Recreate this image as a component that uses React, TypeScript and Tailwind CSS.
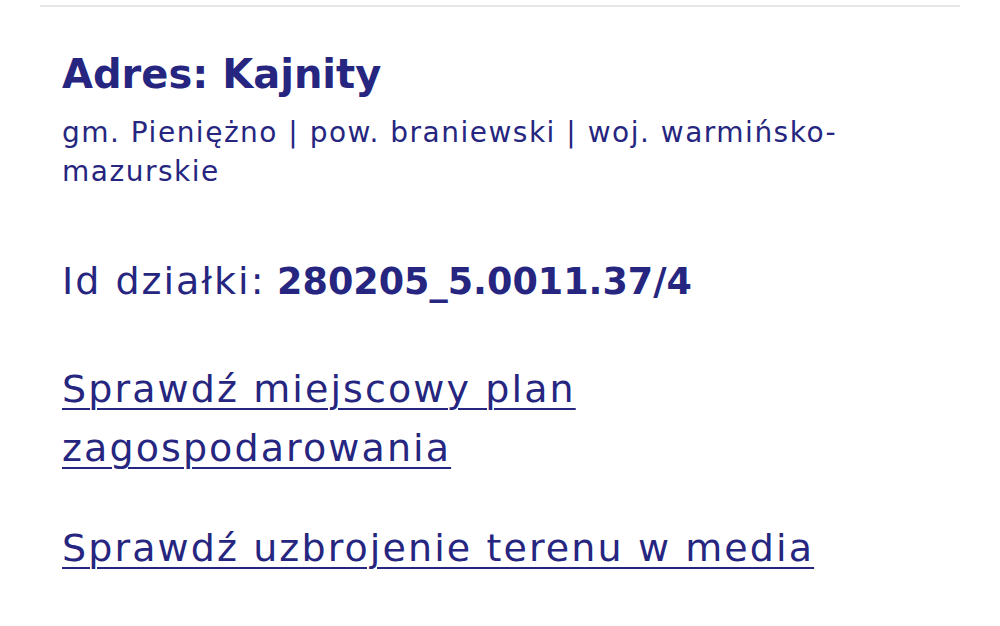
import React from 'react';

const navy = 'text-[#262680]';

export default function App() {
  return (
    <div className="min-h-screen bg-white font-['DejaVu_Sans',sans-serif]">
      <div className="mx-[40px] pt-[5px]">
        <div className="h-[2px] bg-[#e6e6e6]" />
        <div className={`px-[22px] pt-[43px] ${navy}`}>
          <h1 className="text-[40px] font-bold leading-[48px]">Adres: Kajnity</h1>
          <p className="mt-[15px] max-w-[850px] text-[28px] leading-[39px] tracking-[1.5px]">
            gm. Pieniężno | pow. braniewski | woj. warmińsko-mazurskie
          </p>
          <p className="mt-[66px] text-[36.5px] leading-[48px]">
            <span className="text-[38px] tracking-[2px]">Id działki:</span>{' '}
            <span className="font-bold">280205_5.0011.37/4</span>
          </p>
          <a href="#" className="mt-[54px] block text-[38px] leading-[59px] tracking-[2.1px] underline underline-offset-[6px] decoration-[2px]">
            Sprawdź miejscowy plan
            <br />
            zagospodarowania
          </a>
          <a href="#" className="mt-[41px] block text-[38px] leading-[59px] tracking-[2.1px] underline underline-offset-[6px] decoration-[2px]">
            Sprawdź uzbrojenie terenu w media
          </a>
        </div>
      </div>
    </div>
  );
}
